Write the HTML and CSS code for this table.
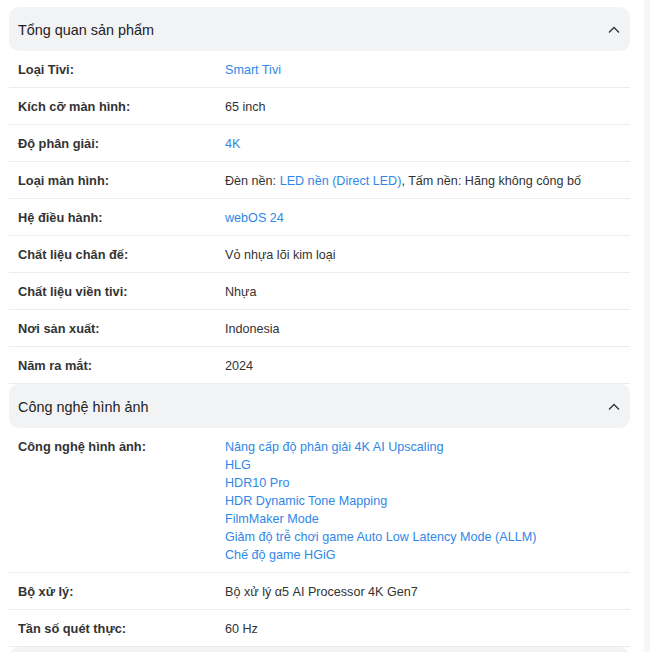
FILE: index.html
```html
<!DOCTYPE html>
<html lang="vi">
<head>
    <meta charset="UTF-8">
    <meta name="viewport" content="width=device-width, initial-scale=1.0">
    <title>Thông số kỹ thuật</title>
    <link rel="stylesheet" href="styles.css">
</head>
<body>
    <div class="page">
        <main class="specs">
            <!-- Tong quan -->
            <section class="group">
                <div class="group-head">
                    <span>Tổng quan sản phẩm</span>
                    <svg class="chevron" width="14" height="14" viewBox="0 0 14 14"><polyline points="2,9.5 7,4.5 12,9.5" fill="none" stroke="#333" stroke-width="1.3"/></svg>
                </div>
                <div class="row"><div class="label">Loại Tivi:</div><div class="value"><a href="#">Smart Tivi</a></div></div>
                <div class="row"><div class="label">Kích cỡ màn hình:</div><div class="value">65 inch</div></div>
                <div class="row"><div class="label">Độ phân giải:</div><div class="value"><a href="#">4K</a></div></div>
                <div class="row"><div class="label">Loại màn hình:</div><div class="value">Đèn nền: <a href="#">LED nền (Direct LED)</a>, Tấm nền: Hãng không công bố</div></div>
                <div class="row"><div class="label">Hệ điều hành:</div><div class="value"><a href="#">webOS 24</a></div></div>
                <div class="row"><div class="label">Chất liệu chân đế:</div><div class="value">Vỏ nhựa lõi kim loại</div></div>
                <div class="row"><div class="label">Chất liệu viền tivi:</div><div class="value">Nhựa</div></div>
                <div class="row"><div class="label">Nơi sản xuất:</div><div class="value">Indonesia</div></div>
                <div class="row"><div class="label">Năm ra mắt:</div><div class="value">2024</div></div>
            </section>

            <!-- Cong nghe hinh anh -->
            <section class="group">
                <div class="group-head">
                    <span>Công nghệ hình ảnh</span>
                    <svg class="chevron" width="14" height="14" viewBox="0 0 14 14"><polyline points="2,9.5 7,4.5 12,9.5" fill="none" stroke="#333" stroke-width="1.3"/></svg>
                </div>
                <div class="row">
                    <div class="label">Công nghệ hình ảnh:</div>
                    <div class="value list">
                        <a href="#">Nâng cấp độ phân giải 4K AI Upscaling</a>
                        <a href="#">HLG</a>
                        <a href="#">HDR10 Pro</a>
                        <a href="#">HDR Dynamic Tone Mapping</a>
                        <a href="#">FilmMaker Mode</a>
                        <a href="#">Giảm độ trễ chơi game Auto Low Latency Mode (ALLM)</a>
                        <a href="#">Chế độ game HGiG</a>
                    </div>
                </div>
                <div class="row"><div class="label">Bộ xử lý:</div><div class="value">Bộ xử lý α5 AI Processor 4K Gen7</div></div>
                <div class="row"><div class="label">Tần số quét thực:</div><div class="value">60 Hz</div></div>
            </section>

            <!-- nhom tiep theo, chi thay mep tren -->
            <section class="group">
                <div class="group-head"></div>
            </section>
        </main>
        <div class="track"></div>
    </div>
</body>
</html>
```

FILE: styles.css
```css
body { margin: 0; font-family: "Liberation Sans", Arial, sans-serif; background: #fff; color: #333; }
a { color: #2f88e8; text-decoration: none; }

.page { display: flex; padding-left: 9px; height: 652px; overflow: hidden; }
.specs { width: 621px; padding-top: 7px; }
.track { width: 6px; margin-left: 14px; background: #f7f7f8; }

.group-head { display: flex; align-items: center; justify-content: space-between; height: 44px; padding: 1px 9px 0 9px; box-sizing: border-box; background: #f2f3f5; border-radius: 10px; font-size: 14.4px; color: #222; }
.chevron { display: block; }

.row { display: flex; padding: 10px 0 8px; border-bottom: 1px solid #ececec; font-size: 12.6px; line-height: 18px; }
.label { width: 207px; padding-left: 9px; font-weight: bold; font-size: 12.8px; color: #333; }
.value { flex: 1; color: #333; }
.list { display: flex; flex-direction: column; }
```
